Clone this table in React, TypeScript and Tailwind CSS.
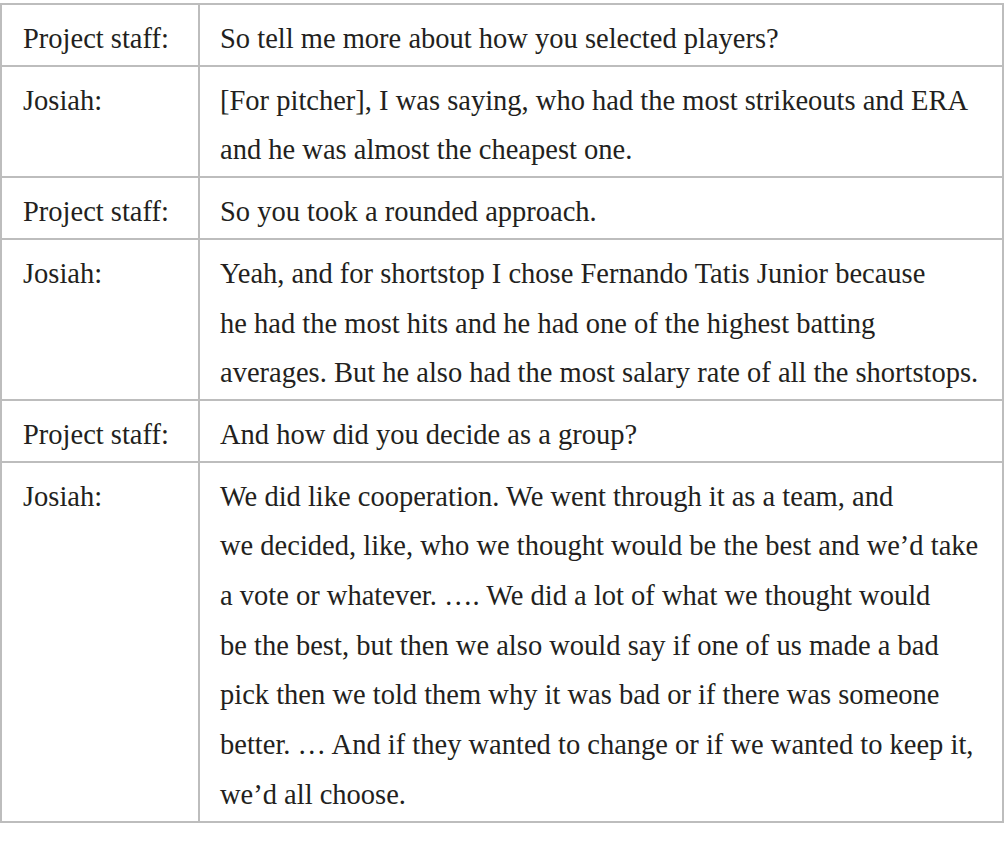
const rows: { who: string; lines: string[] }[] = [
  { who: "Project staff:", lines: ["So tell me more about how you selected players?"] },
  {
    who: "Josiah:",
    lines: [
      "[For pitcher], I was saying, who had the most strikeouts and ERA",
      "and he was almost the cheapest one.",
    ],
  },
  { who: "Project staff:", lines: ["So you took a rounded approach."] },
  {
    who: "Josiah:",
    lines: [
      "Yeah, and for shortstop I chose Fernando Tatis Junior because",
      "he had the most hits and he had one of the highest batting",
      "averages. But he also had the most salary rate of all the shortstops.",
    ],
  },
  { who: "Project staff:", lines: ["And how did you decide as a group?"] },
  {
    who: "Josiah:",
    lines: [
      "We did like cooperation. We went through it as a team, and",
      "we decided, like, who we thought would be the best and we\u2019d take",
      "a vote or whatever. \u2026. We did a lot of what we thought would",
      "be the best, but then we also would say if one of us made a bad",
      "pick then we told them why it was bad or if there was someone",
      "better. \u2026 And if they wanted to change or if we wanted to keep it,",
      "we\u2019d all choose.",
    ],
  },
];

export default function App() {
  return (
    <div className="w-[1005px] h-[841px] bg-white pt-[3px] font-['Liberation_Serif',serif] text-[#231f20]">
      <table className="w-[1004px] border-collapse">
        <tbody>
          {rows.map((r, i) => (
            <tr key={i}>
              <td className="w-[198px] border-2 border-[#bdbdbd] align-top pl-[21px] pr-2 pt-[9px] pb-[1px] text-[28.5px] leading-[49.7px] whitespace-nowrap">
                {r.who}
              </td>
              <td className="border-2 border-[#bdbdbd] align-top pl-[20px] pr-1 pt-[9px] pb-[1px] text-[28.5px] leading-[49.7px]">
                {r.lines.map((l, j) => (
                  <div key={j} className="whitespace-nowrap">{l}</div>
                ))}
              </td>
            </tr>
          ))}
        </tbody>
      </table>
    </div>
  );
}
